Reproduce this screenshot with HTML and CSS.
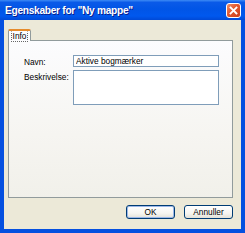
FILE: index.html
```html
<!DOCTYPE html>
<html lang="da">
<head>
    <meta charset="UTF-8">
    <title>Egenskaber for "Ny mappe"</title>
    <link rel="stylesheet" href="styles.css">
</head>
<body>
    <div class="window">
        <div class="titlebar">
            <span class="title">Egenskaber for "Ny mappe"</span>
            <span class="close">
                <svg width="9" height="9" viewBox="0 0 9 9">
                    <path d="M1.5 1.5 L7.5 7.5 M7.5 1.5 L1.5 7.5" stroke="#fff" stroke-width="1.8" stroke-linecap="square"/>
                </svg>
            </span>
        </div>
        <div class="frame">
            <div class="tabs">
                <div class="tab active"><span class="focus">Info</span></div>
            </div>
            <div class="panel">
                <div class="form-row">
                    <label for="navn">Navn:</label>
                    <input type="text" id="navn" value="Aktive bogmærker">
                </div>
                <div class="form-row">
                    <label for="beskrivelse">Beskrivelse:</label>
                    <textarea id="beskrivelse"></textarea>
                </div>
            </div>
            <div class="buttons">
                <button class="button default">OK</button>
                <button class="button">Annuller</button>
            </div>
        </div>
    </div>
</body>
</html>
```

FILE: styles.css
```css
:root {
    --xp-blue: #0550e0;
    --face: #ece9d8;
    --tab-border: #919b9c;
    --input-border: #7f9db9;
    --text-color: #000;
}

body {
    margin: 0;
    padding: 0;
    background: #fff;
    font-family: 'Liberation Sans', Arial, sans-serif;
    font-size: 8.3px;
    color: var(--text-color);
}

.window {
    width: 245px;
    height: 233px;
    display: flex;
    flex-direction: column;
}

.titlebar {
    height: 20px;
    flex: none;
    display: flex;
    align-items: center;
    justify-content: space-between;
    padding: 0 4px 0 5px;
    background: linear-gradient(to bottom, #3d8bf5 0%, #0a5ae8 12%, #0155e6 45%, #0058ee 80%, #0049d6 100%);
}

.title {
    color: #fff;
    font-weight: bold;
    font-size: 10.2px;
    letter-spacing: -0.3px;
    text-shadow: 1px 1px 0 #0a1e8c;
    margin-top: 1px;
}

.close {
    width: 15px;
    height: 15px;
    box-sizing: border-box;
    border: 1px solid #fff;
    border-radius: 3px;
    background: linear-gradient(135deg, #f0906a 0%, #e2572e 45%, #c9401c 100%);
    display: flex;
    align-items: center;
    justify-content: center;
}

.close svg {
    display: block;
}

.frame {
    flex: 1;
    display: flex;
    flex-direction: column;
    background: var(--face);
    border: 4px solid var(--xp-blue);
    border-top: none;
    padding: 9px 8px 0 4px;
}

.tabs {
    display: flex;
    height: 11px;
    position: relative;
    z-index: 1;
}

.tab {
    width: 23px;
    height: 12px;
    box-sizing: border-box;
    background: #fcfcfe;
    border: 1px solid var(--tab-border);
    border-top: 2px solid #e68b2c;
    border-bottom: none;
    border-radius: 2px 2px 0 0;
    display: flex;
    align-items: flex-start;
    justify-content: center;
}

.focus {
    border: 1px dotted #666;
    border-top-color: transparent;
    padding: 0 1px;
    line-height: 9px;
}

.panel {
    height: 158px;
    box-sizing: border-box;
    border: 1px solid var(--tab-border);
    background: linear-gradient(to bottom, #fcfcfe 0%, #f6f5f1 60%, #f1f0ea 100%);
    padding: 14px 13px 0 15px;
    display: flex;
    flex-direction: column;
    gap: 3px;
}

.form-row {
    display: flex;
    align-items: flex-start;
}

.form-row label {
    width: 49px;
    flex: none;
    padding-top: 2px;
}

.form-row input,
.form-row textarea {
    flex: 1;
    box-sizing: border-box;
    margin: 0;
    border: 1px solid var(--input-border);
    background: #fff;
    font: inherit;
    color: inherit;
    outline: none;
    resize: none;
}

.form-row input {
    height: 12px;
    padding: 0 2px;
}

.form-row textarea {
    height: 35px;
    padding: 1px 2px;
}

.buttons {
    display: flex;
    justify-content: flex-end;
    gap: 9px;
    margin-top: 7px;
}

.button {
    width: 49px;
    height: 14px;
    box-sizing: border-box;
    margin: 0;
    padding: 0;
    border: 1px solid #003c74;
    border-radius: 3px;
    background: linear-gradient(to bottom, #fff 0%, #f6f5f1 60%, #e3e1d8 100%);
    font: inherit;
    color: inherit;
}

.button.default {
    box-shadow: inset 0 0 0 1px #9cb7e8;
}
```
